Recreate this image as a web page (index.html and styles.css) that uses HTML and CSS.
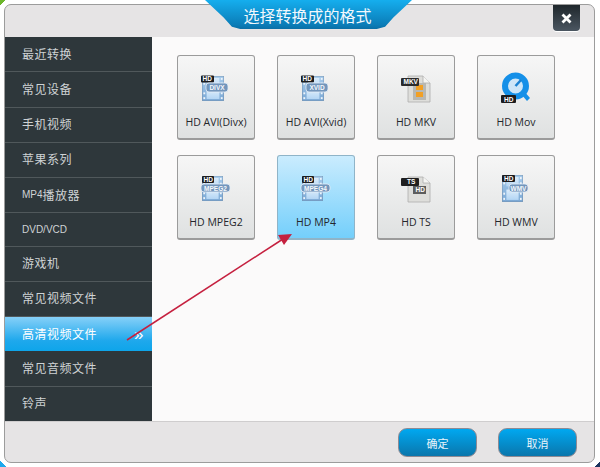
FILE: index.html
```html
<!DOCTYPE html>
<html lang="zh">
<head>
<meta charset="utf-8">
<title>选择转换成的格式</title>
<link rel="stylesheet" href="styles.css">
</head>
<body>
<svg width="0" height="0" class="defs">
  <defs>
    <linearGradient id="film" x1="0" y1="0" x2="0" y2="1"><stop offset="0" stop-color="#a6cbec"/><stop offset="1" stop-color="#7ba8d4"/></linearGradient>
    <linearGradient id="cell" x1="0" y1="0" x2="0" y2="1"><stop offset="0" stop-color="#dcedfb"/><stop offset="1" stop-color="#b3d5f4"/></linearGradient>
    <symbol id="filmstrip" viewBox="3 2 24 26" preserveAspectRatio="none">
      <rect x="3" y="2" width="24" height="26" rx="1" fill="url(#film)" stroke="#6f8aa6" stroke-width=".8"/>
      <rect x="8" y="4" width="14" height="9" fill="url(#cell)"/>
      <rect x="8" y="16" width="14" height="10" fill="url(#cell)"/>
      <g fill="#eef4fa"><rect x="4.500" y="4" width="2" height="2"/><rect x="4.500" y="9" width="2" height="2"/><rect x="4.500" y="19" width="2" height="2"/><rect x="4.500" y="24" width="2" height="2"/><rect x="23.500" y="4" width="2" height="2"/><rect x="23.500" y="9" width="2" height="2"/><rect x="23.500" y="19" width="2" height="2"/><rect x="23.500" y="24" width="2" height="2"/></g>
    </symbol>
  </defs>
</svg>
<div class="window">
  <header class="titlebar">
    <h1 class="title">选择转换成的格式</h1>
    <button class="close" aria-label="关闭">
      <svg width="11" height="11" viewBox="0 0 11 11"><path d="M1.500 1.500l8 8M9.500 1.500l-8 8" stroke="#fff" stroke-width="2.800"/></svg>
    </button>
  </header>
  <div class="main">
    <nav class="sidebar">
      <a class="nav-item">最近转换</a>
      <a class="nav-item">常见设备</a>
      <a class="nav-item">手机视频</a>
      <a class="nav-item">苹果系列</a>
      <a class="nav-item"><span class="latin">MP4</span>播放器</a>
      <a class="nav-item plain"><span class="latin">DVD/VCD</span></a>
      <a class="nav-item">游戏机</a>
      <a class="nav-item">常见视频文件</a>
      <a class="nav-item active">高清视频文件<span class="chev">»</span></a>
      <a class="nav-item">常见音频文件</a>
      <a class="nav-item">铃声</a>
    </nav>
    <section class="grid">
      <div class="tile">
        <svg class="icon" width="40" height="40" viewBox="0 0 40 40"><use href="#filmstrip" x="6" y="5" width="22" height="25"/><rect x="5" y="4.500" width="13" height="7" rx="1" fill="#1c1c1e"/><text x="6.500" y="10.300" class="t-hd">HD</text><rect x="10" y="12" width="22" height="9" rx="3" class="pill"/><text x="21" y="19" class="t-fmt">DIVX</text></svg>
        <span class="label">HD AVI(Divx)</span>
      </div>
      <div class="tile">
        <svg class="icon" width="40" height="40" viewBox="0 0 40 40"><use href="#filmstrip" x="6" y="5" width="22" height="25"/><rect x="5" y="4.500" width="13" height="7" rx="1" fill="#1c1c1e"/><text x="6.500" y="10.300" class="t-hd">HD</text><rect x="10" y="12" width="22" height="9" rx="3" class="pill"/><text x="21" y="19" class="t-fmt">XVID</text></svg>
        <span class="label">HD AVI(Xvid)</span>
      </div>
      <div class="tile">
        <svg class="icon" width="40" height="40" viewBox="0 0 40 40"><path d="M12 5h15l7 7v19H12z" fill="#dededb" stroke="#adadad" stroke-width=".8"/><path d="M27 5v7h7" fill="#f5f5f3" stroke="#adadad" stroke-width=".8"/><rect x="17" y="12" width="13" height="17" fill="#b8b8b3"/><rect x="20" y="14" width="7" height="5" fill="#f2a024"/><rect x="20" y="21" width="7" height="5" fill="#f2a024"/><rect x="5" y="7" width="18" height="8" rx="1" fill="#2b2b2c"/><text x="7.500" y="13.300" class="t-hd">MKV</text></svg>
        <span class="label">HD MKV</span>
      </div>
      <div class="tile">
        <svg class="icon" width="40" height="40" viewBox="0 0 40 40"><path d="M25 23l6 7 3-3-6-7z" fill="#1590e8"/><circle cx="19.500" cy="15" r="10.500" fill="#cde6f8" stroke="#1590e8" stroke-width="6"/><path d="M19.500 15l5.500-6" stroke="#1a82d2" stroke-width="2.500"/><rect x="5" y="24" width="15" height="8" rx="1" fill="#1c1c1e"/><text x="8" y="30.500" class="t-hd">HD</text></svg>
        <span class="label">HD Mov</span>
      </div>
      <div class="tile">
        <svg class="icon" width="40" height="40" viewBox="0 0 40 40"><use href="#filmstrip" x="6" y="5" width="21" height="25"/><rect x="6" y="5" width="12" height="7" rx="1" fill="#1c1c1e"/><text x="7.500" y="10.800" class="t-hd">HD</text><rect x="5" y="13" width="29" height="8" rx="3" class="pill"/><text x="19.500" y="19.500" class="t-fmt">MPEG2</text></svg>
        <span class="label">HD MPEG2</span>
      </div>
      <div class="tile selected">
        <svg class="icon" width="40" height="40" viewBox="0 0 40 40"><use href="#filmstrip" x="6" y="5" width="21" height="25"/><rect x="6" y="5" width="12" height="7" rx="1" fill="#1c1c1e"/><text x="7.500" y="10.800" class="t-hd">HD</text><rect x="5" y="13" width="29" height="8" rx="3" class="pill"/><text x="19.500" y="19.500" class="t-fmt">MPEG4</text></svg>
        <span class="label">HD MP4</span>
      </div>
      <div class="tile">
        <svg class="icon" width="40" height="40" viewBox="0 0 40 40"><path d="M12 6h15l7 6v19H12z" fill="#dededb" stroke="#adadad" stroke-width=".8"/><path d="M27 6v6h7" fill="#f5f5f3" stroke="#adadad" stroke-width=".8"/><rect x="5" y="7" width="18" height="8" rx="1" fill="#1f1f20"/><text x="11" y="13.300" class="t-hd">TS</text><rect x="17" y="15" width="13" height="8" fill="#5d5d5d"/><text x="19.500" y="21.300" class="t-hd">HD</text></svg>
        <span class="label">HD TS</span>
      </div>
      <div class="tile">
        <svg class="icon" width="40" height="40" viewBox="0 0 40 40"><use href="#filmstrip" x="6" y="4" width="21" height="27"/><rect x="6" y="4" width="13" height="7" rx="1" fill="#1c1c1e"/><text x="8" y="9.800" class="t-hd">HD</text><rect x="13" y="13" width="19" height="8" rx="3" class="pill"/><text x="22.500" y="19.500" class="t-fmt">WMV</text></svg>
        <span class="label">HD WMV</span>
      </div>
    </section>
  </div>
  <footer class="footer">
    <button class="btn">确定</button>
    <button class="btn">取消</button>
  </footer>
</div>
<svg class="arrow" width="600" height="467" viewBox="0 0 600 467">
  <path d="M127 340L283 239" stroke="#c5203f" stroke-width="1.500" fill="none"/>
  <path d="M292 234l-14 1 6 10z" fill="#c5203f"/>
</svg>
</body>
</html>
```
FILE: styles.css
```css
* { box-sizing: border-box; }
html, body { margin: 0; padding: 0; }
body {
  width: 600px;
  height: 467px;
  background:
    linear-gradient(135deg, #6cb52c 50%, transparent 50%) 0 0 / 6px 6px no-repeat,
    linear-gradient(45deg, #1ea8ec 50%, transparent 50%) 0 100% / 6px 6px no-repeat,
    linear-gradient(-45deg, #1d3560 50%, transparent 50%) 100% 100% / 6px 6px no-repeat,
    #fff;
  padding: 4px 5px 4px 4px;
  position: relative;
  overflow: hidden;
  font-family: "Noto Sans CJK SC", "Liberation Sans", sans-serif;
}
.defs { position: absolute; }
.window {
  width: 591px;
  height: 459px;
  border: 1px solid #9c9c9c;
  border-radius: 7px;
  background: #e6e4e5;
  display: flex;
  flex-direction: column;
  overflow: hidden;
}
.titlebar {
  height: 32px;
  flex: none;
  display: flex;
  justify-content: flex-end;
  align-items: flex-start;
  padding-right: 14px;
}
.title {
  position: absolute;
  left: 205px;
  top: 0;
  width: 207px;
  height: 29px;
  margin: 0;
  padding: 3px 2px 0 0;
  text-align: center;
  font-size: 16px;
  line-height: 24px;
  font-weight: 400;
  color: #f2f8fd;
  background: linear-gradient(#15aeee, #0b7db8 85%, #0a6fa6);
  clip-path: polygon(0 0, 100% 0, 91% 60%, 87% 92%, 83% 100%, 17% 100%, 13% 92%, 9% 60%);
}
.close {
  width: 27px;
  height: 26px;
  border: 0;
  border-radius: 0 0 4px 4px;
  padding: 0;
  background: linear-gradient(#1f272c, #4b5661);
  display: flex;
  align-items: center;
  justify-content: center;
  box-shadow: 0 1px 0 #fff;
}
.main {
  flex: none;
  height: 384px;
  display: flex;
}
.sidebar {
  width: 147px;
  flex: none;
  display: flex;
  flex-direction: column;
  background: #2e373b;
}
.nav-item {
  height: 35px;
  flex: 1 1 0;
  padding: 0 0 2px 17px;
  display: flex;
  align-items: center;
  font-size: 12px;
  letter-spacing: .5px;
  color: #cfd3d5;
  border-bottom: 1px solid #50585b;
  position: relative;
}
.nav-item.plain { padding-bottom: 0; }
.nav-item:last-child { border-bottom: 0; }
.nav-item.active {
  color: #fff;
  border-bottom: 0;
  background: linear-gradient(#86d0f8, #1ea8ec 70%, #0ea5ea);
}
.latin {
  font-family: "Liberation Sans", sans-serif;
  font-size: 10px;
  letter-spacing: 0;
}
.chev {
  position: absolute;
  right: 8px;
  top: 9px;
  font-size: 17px;
  line-height: 17px;
  font-family: "Liberation Sans", sans-serif;
  color: #fff;
}
.grid {
  flex: 1;
  background: #fbfafa;
  padding: 18px 0 0 25px;
  display: grid;
  grid-template-columns: repeat(4, 78px);
  grid-auto-rows: 85px;
  column-gap: 22px;
  row-gap: 15px;
  align-content: start;
}
.tile {
  border: 1px solid #9b9b9b;
  border-bottom-width: 2px;
  border-radius: 3px;
  background: linear-gradient(#f6f6f6, #dfe1e1);
  display: flex;
  flex-direction: column;
  align-items: center;
  padding-top: 15px;
}
.tile.selected {
  background: linear-gradient(#caecfe, #74cffb);
  border-color: #8fb4c8;
}
.icon { flex: none; }
.label {
  margin-top: 3px;
  font-family: "Open Sans", "Liberation Sans", sans-serif;
  font-size: 10.500px;
  line-height: 16px;
  color: #24262b;
  white-space: nowrap;
}
.pill {
  fill: #7396bc;
  stroke: #e4eef7;
  stroke-width: .8;
}
.t-hd {
  font-family: "Liberation Sans", sans-serif;
  font-size: 6.500px;
  font-weight: 700;
  fill: #fff;
}
.t-fmt {
  font-family: "Liberation Sans", sans-serif;
  font-size: 6.500px;
  font-weight: 700;
  text-anchor: middle;
  fill: #f4f8fc;
}
.footer {
  flex: 1;
  display: flex;
  justify-content: flex-end;
  align-items: flex-start;
  gap: 21px;
  padding: 6px 17px 0 0;
  border-top: 1px solid #cfcdce;
}
.btn {
  width: 79px;
  height: 29px;
  padding: 0;
  border: 1px solid #8f8a93;
  border-radius: 9px;
  background: linear-gradient(#00a8f0, #0a76ac);
  color: #e8f4fb;
  font-family: "Noto Sans CJK SC", sans-serif;
  font-size: 11px;
}
.arrow {
  position: absolute;
  left: 0;
  top: 0;
  pointer-events: none;
}
```
